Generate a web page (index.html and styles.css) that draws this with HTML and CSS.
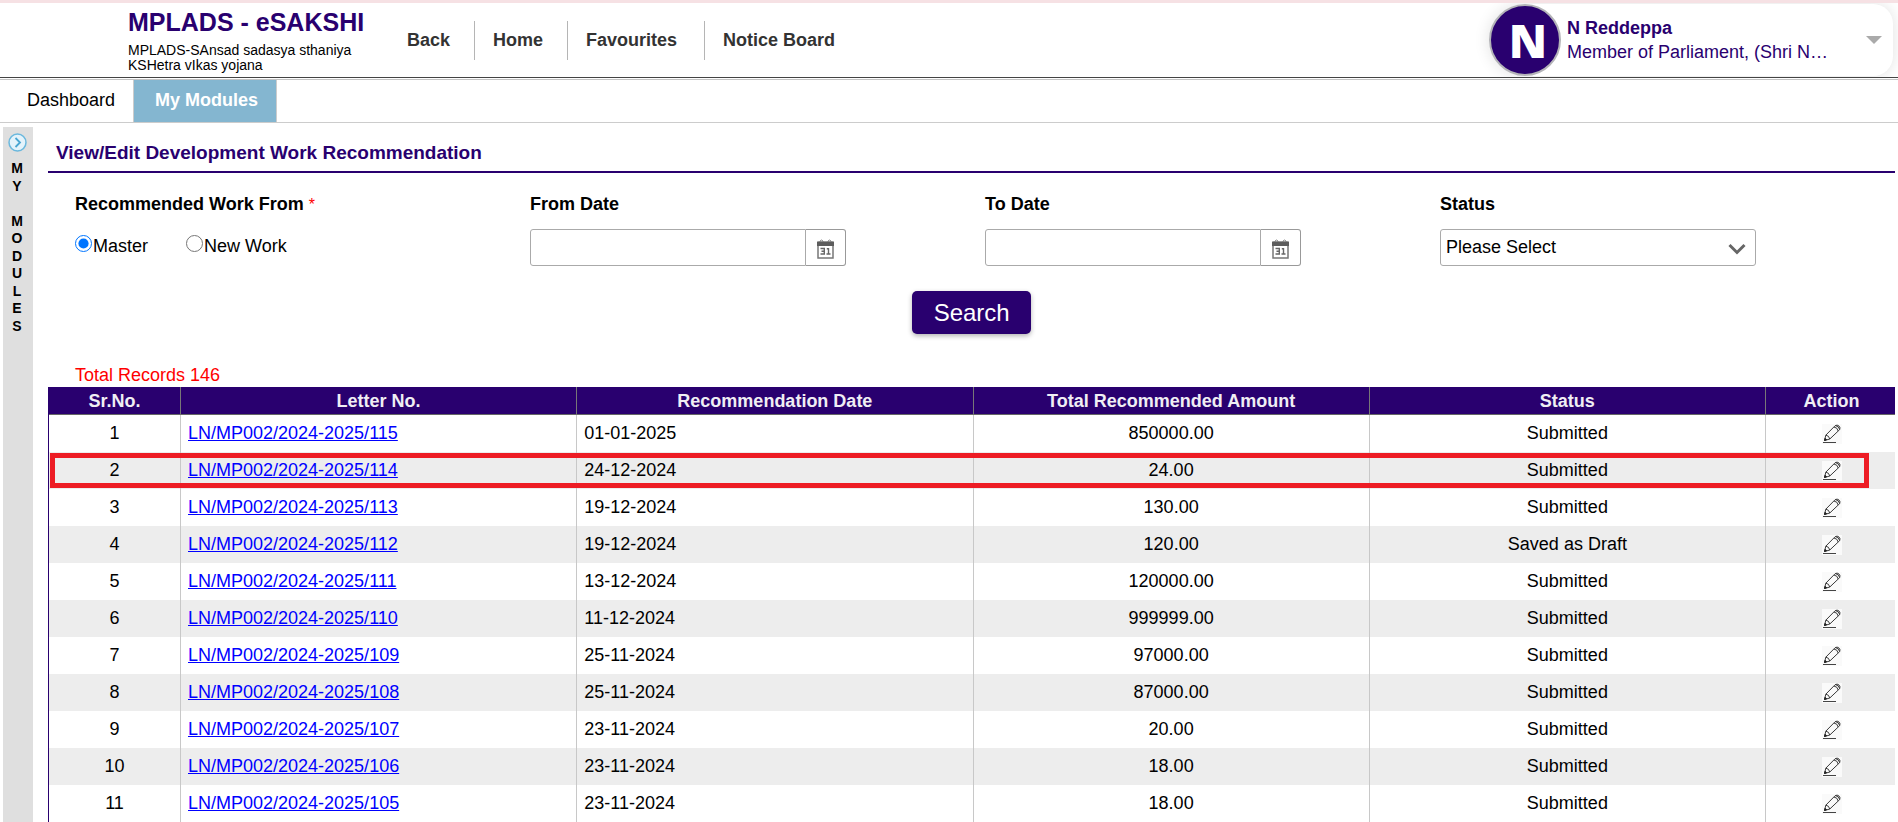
FILE: index.html
```
<!DOCTYPE html>
<html lang="en">
<head>
<meta charset="utf-8">
<title>MPLADS - eSAKSHI</title>
<link rel="stylesheet" href="styles.css">
</head>
<body>
<svg class="defs" aria-hidden="true">
  <symbol id="pencil" viewBox="0 0 20 20">
    <path d="M2.500 16.500 3.800 11.200 13 1.800Q15.200.300 17 2T17.500 5.800L7.800 15zM3.800 11.200Q7 11.500 7.800 15M12 3Q15.500 3.500 16.200 7M13.500 1.500Q17 2.500 17.700 5.500" fill="none" stroke="#3a3a3a" stroke-linejoin="round"/>
    <path d="M2.500 16.500l.6-2.200 1.500 1.500z" fill="#222" stroke="#222"/>
    <path d="M1 18.500h13" stroke="#444"/>
  </symbol>
  <symbol id="calendar" viewBox="0 0 17 20">
    <path d="M3 4V2q1.500-2 3 0v2M11 4V2q1.500-2 3 0v2" fill="none" stroke="#888"/>
    <path d="M1 3h15v16H1z" fill="none" stroke="#777" stroke-width="1.500"/>
    <path d="M0 3h17v4H0z" fill="#5c5c5c"/>
    <path d="M3.500 9.500h3.800v5.500H3.500M4.500 12.200h3M11.500 15V9.800h-1.700M9.500 15h4" fill="none" stroke="#666" stroke-width="1.400"/>
  </symbol>
</svg>
<header class="header">
  <div class="brand">
    <h1 class="brand-name">MPLADS - eSAKSHI</h1>
    <p class="brand-text">MPLADS-SAnsad sadasya sthaniya<br>KSHetra vIkas yojana</p>
  </div>
  <nav class="menu">
    <a class="menu-link" href="#">Back</a>
    <a class="menu-link" href="#">Home</a>
    <a class="menu-link wide" href="#">Favourites</a>
    <a class="menu-link" href="#">Notice Board</a>
  </nav>
  <button class="profile" type="button">
    <span class="avatar">N</span>
    <span class="who"><b>N Reddeppa</b><span class="role">Member of Parliament, (Shri N…</span></span>
    <svg class="caret" viewBox="0 0 16 8"><path d="M0 0h16L8 8z" fill="#aaa"/></svg>
  </button>
</header>
<nav class="tabs">
  <a class="tab" href="#">Dashboard</a>
  <a class="tab active" href="#">My Modules</a>
</nav>
<div class="layout">
  <aside class="side">
    <svg class="side-icon" viewBox="0 0 19 19"><circle cx="9.500" cy="9.500" r="8.500" fill="#e4f3fb" stroke="#6bb8dd" stroke-width="1.500"/><path d="M7.500 5l4.500 4.500L7.500 14" fill="none" stroke="#4aa6d2" stroke-width="1.800"/></svg>
    <div class="side-text"><span>M</span><span>Y</span><span></span><span>M</span><span>O</span><span>D</span><span>U</span><span>L</span><span>E</span><span>S</span></div>
  </aside>
  <main class="main">
    <h2 class="title">View/Edit Development Work Recommendation</h2>
    <form class="form">
      <div class="filters">
        <div class="field" role="radiogroup" aria-labelledby="source">
          <span class="label" id="source">Recommended Work From <span class="required">*</span></span>
          <div class="radios">
            <label class="radio"><input type="radio" name="source" checked>Master</label>
            <label class="radio"><input type="radio" name="source">New Work</label>
          </div>
        </div>
        <div class="field">
          <label class="label" for="from">From Date</label>
          <div class="control"><input class="date" id="from" type="text"><button class="pick" type="button" aria-label="Pick from date"><svg class="cal"><use href="#calendar"/></svg></button></div>
        </div>
        <div class="field">
          <label class="label" for="to">To Date</label>
          <div class="control"><input class="date" id="to" type="text"><button class="pick" type="button" aria-label="Pick to date"><svg class="cal"><use href="#calendar"/></svg></button></div>
        </div>
        <div class="field">
          <label class="label" for="status">Status</label>
          <div class="control"><select class="select" id="status"><option>Please Select</option></select><svg class="chevron" viewBox="0 0 18 12"><path d="M1.500 2 9 9.500 16.500 2" fill="none" stroke="#666" stroke-width="3"/></svg></div>
        </div>
      </div>
      <button class="search" type="button">Search</button>
    </form>
    <p class="total">Total Records 146</p>
    <table class="grid">
      <colgroup><col class="c-num"><col><col><col><col><col class="c-act"></colgroup>
      <thead><tr><th>Sr.No.</th><th>Letter No.</th><th>Recommendation Date</th><th>Total Recommended Amount</th><th>Status</th><th>Action</th></tr></thead>
      <tbody>
        <tr><td>1</td><td class="l"><a href="#">LN/MP002/2024-2025/115</a></td><td class="l">01-01-2025</td><td>850000.00</td><td>Submitted</td><td><button class="edit" aria-label="Edit"><svg><use href="#pencil"/></svg></button></td></tr>
        <tr><td>2<span class="marker"></span></td><td class="l"><a href="#">LN/MP002/2024-2025/114</a></td><td class="l">24-12-2024</td><td>24.00</td><td>Submitted</td><td><button class="edit" aria-label="Edit"><svg><use href="#pencil"/></svg></button></td></tr>
        <tr><td>3</td><td class="l"><a href="#">LN/MP002/2024-2025/113</a></td><td class="l">19-12-2024</td><td>130.00</td><td>Submitted</td><td><button class="edit" aria-label="Edit"><svg><use href="#pencil"/></svg></button></td></tr>
        <tr><td>4</td><td class="l"><a href="#">LN/MP002/2024-2025/112</a></td><td class="l">19-12-2024</td><td>120.00</td><td>Saved as Draft</td><td><button class="edit" aria-label="Edit"><svg><use href="#pencil"/></svg></button></td></tr>
        <tr><td>5</td><td class="l"><a href="#">LN/MP002/2024-2025/111</a></td><td class="l">13-12-2024</td><td>120000.00</td><td>Submitted</td><td><button class="edit" aria-label="Edit"><svg><use href="#pencil"/></svg></button></td></tr>
        <tr><td>6</td><td class="l"><a href="#">LN/MP002/2024-2025/110</a></td><td class="l">11-12-2024</td><td>999999.00</td><td>Submitted</td><td><button class="edit" aria-label="Edit"><svg><use href="#pencil"/></svg></button></td></tr>
        <tr><td>7</td><td class="l"><a href="#">LN/MP002/2024-2025/109</a></td><td class="l">25-11-2024</td><td>97000.00</td><td>Submitted</td><td><button class="edit" aria-label="Edit"><svg><use href="#pencil"/></svg></button></td></tr>
        <tr><td>8</td><td class="l"><a href="#">LN/MP002/2024-2025/108</a></td><td class="l">25-11-2024</td><td>87000.00</td><td>Submitted</td><td><button class="edit" aria-label="Edit"><svg><use href="#pencil"/></svg></button></td></tr>
        <tr><td>9</td><td class="l"><a href="#">LN/MP002/2024-2025/107</a></td><td class="l">23-11-2024</td><td>20.00</td><td>Submitted</td><td><button class="edit" aria-label="Edit"><svg><use href="#pencil"/></svg></button></td></tr>
        <tr><td>10</td><td class="l"><a href="#">LN/MP002/2024-2025/106</a></td><td class="l">23-11-2024</td><td>18.00</td><td>Submitted</td><td><button class="edit" aria-label="Edit"><svg><use href="#pencil"/></svg></button></td></tr>
        <tr><td>11</td><td class="l"><a href="#">LN/MP002/2024-2025/105</a></td><td class="l">23-11-2024</td><td>18.00</td><td>Submitted</td><td><button class="edit" aria-label="Edit"><svg><use href="#pencil"/></svg></button></td></tr>
      </tbody>
    </table>
  </main>
</div>
</body>
</html>
```
FILE: styles.css
```
* { box-sizing: border-box; }
body { margin: 0; min-height: 100vh; display: flex; flex-direction: column; background: #fff; color: #000; font: 18px/20px "Liberation Sans", Arial, sans-serif; }
h1, h2, p { margin: 0; }
button, input, select { font: inherit; color: inherit; margin: 0; }
button { cursor: pointer; }
.defs { display: none; }

.header { display: flex; align-items: stretch; height: 78px; flex: none; padding-left: 128px; border-top: 3px solid #f6e1e4; border-bottom: 1px solid #444; overflow: hidden; }
.brand { width: 279px; padding-top: 4px; }
.brand-name { font-size: 25px; line-height: 30px; color: #29006f; }
.brand-text { margin-top: 6px; font-size: 14px; line-height: 15px; white-space: nowrap; }
.menu { display: flex; align-items: center; }
.menu-link { height: 39px; padding: 0 24px 0 18px; border-right: 1px solid #b5b5b5; font-weight: bold; line-height: 39px; color: #333; text-decoration: none; white-space: nowrap; }
.menu-link:first-child { padding-left: 0; }
.menu-link.wide { padding-right: 27px; }
.menu-link:last-child { border: 0; }
.profile { display: flex; align-items: center; width: 404px; margin: 1px 5px 1px auto; padding: 0 11px 0 0; border: 0; border-radius: 36px 20px 20px 36px; background: #fff; box-shadow: 0 0 16px rgba(0, 0, 0, .12); color: #29006f; text-align: left; }
.avatar { display: grid; place-items: center; width: 72px; height: 72px; flex: none; padding-left: 6px; border: 2px solid #b4b4b8; border-radius: 50%; background: #29006f; color: #fff; font: 800 46px/64px "Open Sans", sans-serif; }
.who { display: flex; flex-direction: column; gap: 4px; margin-left: 6px; flex: 1; white-space: nowrap; }
.caret { width: 16px; height: 8px; }

.tabs { display: flex; height: 44px; flex: none; margin-top: 1px; border-top: 1px solid #c4c4c4; border-bottom: 1px solid #ccc; }
.tab { padding: 0 18px 0 27px; line-height: 40px; color: #000; text-decoration: none; }
.tab.active { padding: 0 18px 0 21px; border: solid #ccc; border-width: 0 1px; background: #84b6d0; color: #fff; font-weight: bold; }

.layout { display: flex; flex: 1; padding: 4px 3px 0; }
.side { display: flex; flex-direction: column; align-items: center; width: 30px; flex: none; padding-top: 6px; background: #dfdfdf; }
.side-icon { width: 19px; height: 19px; margin-right: 2px; }
.side-text { display: grid; grid-template-rows: repeat(10, 1fr); height: 175px; margin: 8px 2px 0 0; font-size: 14px; font-weight: bold; line-height: 17px; text-align: center; }
.main { flex: 1; min-width: 0; margin-left: 15px; }
.title { padding: 16px 8px 8px; border-bottom: 2px solid #29006f; font-size: 19px; line-height: 20px; color: #29006f; }
.form { padding: 21px 0 0 27px; }
.filters { display: grid; grid-template-columns: repeat(4, 1fr); }
.label { display: block; margin-bottom: 15px; font-weight: bold; }
.required { color: #f00; font-size: 16px; font-weight: normal; }
.radios { display: flex; gap: 38px; padding-top: 5px; }
.radio { display: flex; align-items: flex-start; gap: 1px; line-height: 22px; }
.radio input { width: 17px; height: 17px; }
.control { position: relative; display: flex; width: 316px; max-width: 95%; height: 37px; }
.date { flex: 1; min-width: 0; padding: 0 6px; border: 1px solid #aaa; border-radius: 3px 0 0 3px; background: #fff; }
.pick { display: grid; place-items: center; width: 40px; padding: 2px 0 0; border: 1px solid #999; border-left: 0; border-radius: 0 3px 3px 0; background: #fff; }
.cal { width: 17px; height: 20px; }
.select { width: 100%; padding: 0 5px 2px; border: 1px solid #aaa; border-radius: 3px; background: #fff; appearance: none; }
.chevron { position: absolute; right: 10px; top: 14px; width: 18px; height: 12px; pointer-events: none; }
.search { display: block; width: 119px; height: 43px; margin: 25px 0 0 46%; padding: 0; border: 0; border-radius: 5px; background: #29006f; color: #fff; font-size: 24px; box-shadow: 0 2px 5px rgba(0, 0, 0, .3); }
.total { margin: 31px 0 0 27px; padding-bottom: 2px; color: #f00; }

.grid { width: 100%; table-layout: fixed; border-collapse: separate; border-spacing: 0; border-left: 1px solid #29006f; text-align: center; }
.c-num { width: 132px; }
.c-act { width: 129px; }
th { height: 28px; padding: 0; border-right: 1px solid #777; border-bottom: 1px solid #666; background: #29006f; color: #f0eef4; }
td { height: 37px; padding: 0 0 2px; border-right: 1px solid #c8c8c8; }
th:last-child, td:last-child { padding-left: 2px; border-right: 0; }
td.l { padding-left: 7px; text-align: left; }
td a { color: #00f; }
tbody tr { position: relative; }
tbody tr:nth-child(even) { background: #ededed; }
.marker { position: absolute; inset: 1px 26px 1px 1px; border: 5px solid #ed1c24; pointer-events: none; }
.edit { display: block; width: 20px; height: 20px; margin: 2px auto 0; padding: 0; border: 0; background: #fafafa; }
.edit svg { display: block; width: 20px; height: 20px; }
```
